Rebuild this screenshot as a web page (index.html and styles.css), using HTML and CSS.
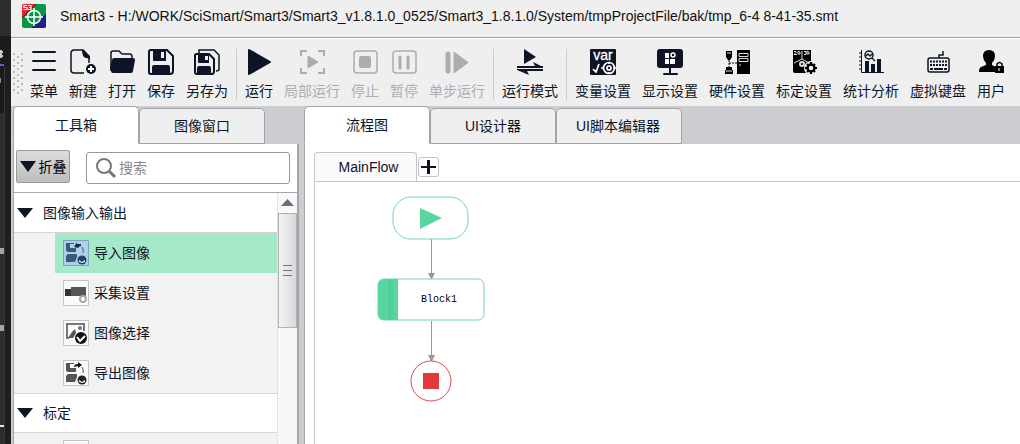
FILE: index.html
```html
<!DOCTYPE html>
<html lang="zh-CN">
<head>
<meta charset="utf-8">
<title>Smart3</title>
<link rel="stylesheet" href="styles.css">
</head>
<body>
<div class="desktop">
  <div class="backdrop" aria-hidden="true">
    <svg width="11" height="444" viewBox="0 0 11 444">
      <path fill="#2d2d2d" d="M0 0h11v36H0zM0 113h4v331H0z"/>
      <path fill="#1b1b1b" d="M0 36h11v77H0z"/>
      <path fill="#383838" d="M4 66h1v378H4z"/>
      <path fill="#1e1e1e" d="M5 66h6v378H5z"/>
      <path stroke="#c9c9c9" stroke-width="2" d="M0 52h3M1 50v8M0 56h3"/>
      <path fill="#6d5bd6" d="M0 64h4v2H0z"/>
      <path fill="#888" d="M0 78h1v5H0z"/>
      <path fill="#a5a5a5" d="M0 248h4v6H0zM0 325h4v6H0z"/>
      <path fill="#e5e5e5" d="M0 425h4v2H0z"/>
    </svg>
  </div>
  <div class="window">
    <header class="titlebar">
      <svg width="24" height="24" viewBox="0 0 24 24" aria-hidden="true">
        <rect width="24" height="24" rx="2" fill="#079447"/>
        <path fill="#e8222c" d="M2 0h12L0 14V2a2 2 0 0 1 2-2z"/>
        <path fill="#211f86" d="M24 10v12a2 2 0 0 1-2 2H10z"/>
        <path stroke="#06351f" d="M14 0 0 14M24 10 10 24"/>
        <circle cx="12" cy="13" r="6.500" fill="none" stroke="#fff" stroke-width="1.500"/>
        <path stroke="#fff" stroke-width="1.500" d="M12 4v18M3 13h18"/>
        <path fill="none" stroke="#fff" stroke-width="1.200" d="M5 1.500H2v2h3v2H1.500M6 1.500h3v4H6M7 3.500h2"/>
      </svg>
      <h1 class="title">Smart3 - H:/WORK/SciSmart/Smart3/Smart3_v1.8.1.0_0525/Smart3_1.8.1.0/System/tmpProjectFile/bak/tmp_6-4 8-41-35.smt</h1>
    </header>

    <nav class="toolbar" aria-label="工具栏">
      <span class="grip" aria-hidden="true"></span>
      <div class="group">
        <button class="tool"><svg viewBox="0 0 26 26" aria-hidden="true"><path stroke="currentColor" stroke-width="2" stroke-linecap="round" d="M2 3h22M2 12h22M2 21h22"/></svg>菜单</button>
        <button class="tool"><svg viewBox="0 0 26 26" aria-hidden="true"><path fill="none" stroke="currentColor" stroke-width="1.500" d="M14 24H4a3 3 0 0 1-3-3V4a3 3 0 0 1 3-3h9l6 7v6"/><path fill="currentColor" d="M12 1h2l6 6v5q0-3-4-3-4-1-4-8z"/><circle cx="21" cy="20" r="5" fill="currentColor"/><path stroke="#fff" stroke-width="2" d="M21 17v6M18 20h6"/></svg>新建</button>
        <button class="tool"><svg viewBox="0 0 26 26" aria-hidden="true"><path fill="none" stroke="currentColor" stroke-width="1.500" stroke-linejoin="round" d="M2 22V4q0-2 2-2h6l3 3h8q2 0 2 3v2"/><path fill="currentColor" d="M5 9h19q2 0 2 2l-2 11q0 2-2 2H4q-2 0-2-2L1 19l2-8q0-2 2-2z"/></svg>打开</button>
        <button class="tool"><svg viewBox="0 0 26 26" aria-hidden="true"><path fill="none" stroke="currentColor" stroke-width="2" stroke-linejoin="round" d="M3 1h16l6 6v15q0 3-3 3H3q-2 0-2-2V3q0-2 2-2z"/><path fill="currentColor" d="M5 1h13v11H6q-1 0-1-1zM6 16h14q2 0 2 2v7H4v-7q0-2 2-2z"/><path fill="#efefef" d="M13 3h3v6h-3z"/></svg>保存</button>
        <button class="tool"><svg viewBox="0 0 26 26" aria-hidden="true"><path fill="none" stroke="currentColor" stroke-width="1.500" d="M5 4V1h15l5 5v14q0 2-3 2"/><path fill="none" stroke="currentColor" stroke-width="2" stroke-linejoin="round" d="M2 5h13l5 5v12q0 3-2 3H3q-2 0-2-2V6z"/><path fill="currentColor" d="M4 5h11v9H5q-1 0-1-1zM5 17h10q2 0 2 2v6H3v-6q0-2 2-2z"/><path fill="#efefef" d="M11 7h3v4h-3z"/></svg>另存为</button>
      </div>
      <div class="group">
        <button class="tool"><svg viewBox="0 0 26 26" aria-hidden="true"><path fill="currentColor" stroke="currentColor" stroke-width="2" stroke-linejoin="round" d="m3 1 21 12L3 25z"/></svg>运行</button>
        <button class="tool" disabled><svg viewBox="0 0 26 26" aria-hidden="true"><path fill="none" stroke="currentColor" stroke-width="2" d="M2 7V2h6M19 2h6v5M25 19v5h-6M8 24H2v-5"/><path fill="currentColor" stroke="currentColor" stroke-linejoin="round" d="m9 7 10 6-10 6z"/></svg>局部运行</button>
        <button class="tool" disabled><svg viewBox="0 0 26 26" aria-hidden="true"><rect x="2" y="2" width="23" height="22" rx="3" fill="none" stroke="currentColor" stroke-width="1.500"/><rect x="7" y="7" width="12" height="12" rx="2" fill="currentColor"/></svg>停止</button>
        <button class="tool" disabled><svg viewBox="0 0 26 26" aria-hidden="true"><rect x="2" y="2" width="23" height="22" rx="3" fill="none" stroke="currentColor" stroke-width="1.500"/><path stroke="currentColor" stroke-width="3" stroke-linecap="round" d="M9 8v11M17 8v11"/></svg>暂停</button>
        <button class="tool" disabled><svg viewBox="0 0 26 26" aria-hidden="true"><path fill="none" stroke="currentColor" stroke-width="5" stroke-linecap="round" d="M4 5v17"/><path fill="currentColor" stroke="currentColor" stroke-linejoin="round" d="m10 3 14 10.500L10 24z"/></svg>单步运行</button>
      </div>
      <div class="group">
        <button class="tool"><svg viewBox="0 0 26 26" aria-hidden="true"><path fill="currentColor" d="m7 0 12 8-12 7z"/><path fill="currentColor" d="M0 17h18l-2-4 8 4h2v2H0zM26 20v2H10l2 4-12-5v-1z"/></svg>运行模式</button>
      </div>
      <div class="group">
        <button class="tool"><svg viewBox="0 0 26 26" aria-hidden="true"><rect width="26" height="26" rx="1" fill="currentColor"/><text class="var-text" x="13" y="11">var</text><g fill="none" stroke="#fff" stroke-width="1.700"><circle cx="19" cy="19" r="5.500"/><circle cx="19" cy="19" r="2"/><path d="m3 20 3 3 3-8M11 19h3M19 13v2M19 23v2M23 19h3"/></g></svg>变量设置</button>
        <button class="tool"><svg viewBox="0 0 26 26" aria-hidden="true"><rect y="0" width="26" height="19" rx="3" fill="currentColor"/><path stroke="currentColor" stroke-width="2" stroke-linecap="round" d="M13 18v6M7 25h13"/><path fill="#fff" d="M8 4h4v5H8zM8 10h4v5H8zM13 10h5v5h-5z"/><circle cx="16" cy="6" r="2" fill="none" stroke="#fff" stroke-width="1.500"/></svg>显示设置</button>
        <button class="tool black"><svg viewBox="0 0 26 26" aria-hidden="true"><path fill="currentColor" d="M13 1h13v24H13zM2 2h6v6L6 11H4L2 8zM2 18h6v3h1v4H1v-4h1z"/><path stroke="currentColor" d="M5 11v8M5 14h8" stroke-dasharray="2 1"/><path fill="none" stroke="#ddd" d="M15 4.500h9v3h-9zM15 9.500h9v3h-9zM15 16h2M3 4h4M2 22h6"/></svg>硬件设置</button>
        <button class="tool black"><svg viewBox="0 0 26 26" aria-hidden="true"><path fill="currentColor" d="M2 1h18v12l-5 6v5H4q-2 0-2-2z"/><g fill="none" stroke="#ddd"><path d="M3 2.500h2v1L3 5.500h3M7 2v3h2V3zM13 2.500h2v3h-2M16 2v3h2V3zM11 2v8L3 14M11 10l7 4"/><circle cx="11" cy="15" r="2" stroke-width="2"/></g><circle cx="20" cy="19" r="4.500" fill="none" stroke="#efefef" stroke-width="5"/><circle cx="20" cy="19" r="3.500" fill="none" stroke="currentColor" stroke-width="2.500"/><path fill="none" stroke="currentColor" stroke-width="2" d="M20 13v3M20 22v3M14 19h3M23 19h3M16 15l2 2M24 15l-2 2M16 23l2-2M24 23l-2-2"/></svg>标定设置</button>
        <button class="tool"><svg viewBox="0 0 26 26" aria-hidden="true"><path stroke="currentColor" fill="none" d="M3.500 1v22.500H26M1 4h2M1 8h2M1 12h2M1 16h2M1 20h2"/><path fill="currentColor" d="M7 12h4v12H7zM13 15h4v9h-4zM19 10h4v14h-4z"/><circle cx="11" cy="6" r="4" fill="none" stroke="currentColor" stroke-width="1.500"/><path stroke="currentColor" fill="none" stroke-width="1.300" d="m14 9 3 3M8 7l2-2 2 2 2-2"/></svg>统计分析</button>
        <button class="tool"><svg viewBox="0 0 26 26" aria-hidden="true"><g fill="none" stroke="currentColor" stroke-width="1.500"><path d="M14 9V6h4V2"/><rect x="3" y="9" width="21" height="14" rx="2"/><path stroke-width="2" stroke-dasharray="2 1" d="M5 12.500h17M5 16h17"/><path stroke-width="2" d="M5 20h3M9 20h9M19 20h3"/></g></svg>虚拟键盘</button>
        <button class="tool black"><svg viewBox="0 0 26 26" aria-hidden="true"><path fill="currentColor" d="M11 1q6 0 6 6 0 4-3 7v2l4 2v5H1q0-4 2-5l5-2v-2Q5 11 5 7q0-6 6-6zM17 17h9v7h-9z"/><path fill="none" stroke="currentColor" stroke-width="1.500" d="M19 17v-2q2.500-3 5 0v2"/><path stroke="#fff" d="M21 19v3"/></svg>用户</button>
      </div>
    </nav>

    <main class="workspace">
      <aside class="side">
        <div class="tabs" role="tablist">
          <button class="tab active" role="tab" aria-selected="true">工具箱</button>
          <button class="tab" role="tab" aria-selected="false">图像窗口</button>
        </div>
        <div class="side-body">
          <div class="filter">
            <button class="fold"><svg width="16" height="11" viewBox="0 0 16 11" aria-hidden="true"><path fill="#0c1426" d="M0 0h16L8 11z"/></svg>折叠</button>
            <label class="search">
              <svg width="22" height="22" viewBox="0 0 22 22" aria-hidden="true"><circle cx="9" cy="9" r="7" fill="none" stroke="#777" stroke-width="2"/><path stroke="#777" stroke-width="3" d="m14 14 6 6"/></svg>
              <input type="text" placeholder="搜索" aria-label="搜索">
            </label>
          </div>
          <div class="tree-wrap">
            <div class="tree">
              <button class="branch"><svg width="16" height="10" viewBox="0 0 16 10" aria-hidden="true"><path fill="#0c1426" d="M0 0h16L8 10z"/></svg>图像输入输出</button>
              <ul class="leaves">
                <li><button class="leaf selected"><svg class="thumb" viewBox="0 0 26 26" aria-hidden="true"><path fill="#b0cff0" stroke="#7ba5b5" d="M.5.500h25v25H.5z"/><path fill="#3d5b75" d="M3 3h4v5h6v4H5q-2 0-2-2zM5 14h9v3l-2 5H3v-6z"/><path fill="none" stroke="#3d5b75" d="M7 3.500h4M19 7q2 3 1 6"/><path fill="#12314d" d="m11 7 3-5v2h4v2q-2 0-3 2z"/><circle cx="19" cy="20" r="4.500" fill="#204462"/><path fill="#dcebff" d="m16 20 3 2 3-2v2l-3 1-3-1z"/></svg>导入图像</button></li>
                <li><button class="leaf"><svg class="thumb" viewBox="0 0 26 26" aria-hidden="true"><path fill="#fafafa" stroke="#c4c4c4" d="M.5.500h25v25H.5z"/><path fill="#555" d="M8 7h15v9H8z"/><path fill="#333" d="M2 9h6v7H2z"/><circle cx="20" cy="19" r="3" fill="#fff" stroke="#aaa" stroke-width="2"/></svg>采集设置</button></li>
                <li><button class="leaf"><svg class="thumb" viewBox="0 0 26 26" aria-hidden="true"><path fill="#fafafa" stroke="#c4c4c4" d="M.5.500h25v25H.5z"/><path fill="none" stroke="#777" stroke-width="2" d="M21 11V4H4v14h2"/><path fill="#555" d="m5 18 4-6 3-3 1 4-3 5z"/><circle cx="17" cy="8" r="2" fill="#777"/><circle cx="18" cy="18" r="6" fill="#111"/><path fill="none" stroke="#fff" stroke-width="2" d="m14 17 3 4 5-5"/></svg>图像选择</button></li>
                <li><button class="leaf"><svg class="thumb" viewBox="0 0 26 26" aria-hidden="true"><path fill="#fafafa" stroke="#c4c4c4" d="M.5.500h25v25H.5z"/><path fill="#555" d="M3 3h4v5h6v4H5q-2 0-2-2zM5 14h9v3l-2 5H3v-6z"/><path fill="none" stroke="#555" d="M7 3.500h4M19 7q2 3 1 6"/><path fill="#111" d="M11 7q0-3 4-3V2l4 3-4 3V6z"/><circle cx="19" cy="20" r="4.500" fill="#222"/><path fill="#fff" d="m16 20 3 2 3-2v2l-3 1-3-1z"/></svg>导出图像</button></li>
              </ul>
              <button class="branch"><svg width="16" height="10" viewBox="0 0 16 10" aria-hidden="true"><path fill="#0c1426" d="M0 0h16L8 10z"/></svg>标定</button>
              <ul class="leaves">
                <li><button class="leaf" aria-label="标定工具"><svg class="thumb" viewBox="0 0 26 26" aria-hidden="true"><path fill="#fafafa" stroke="#c4c4c4" d="M.5.500h25v25H.5z"/></svg></button></li>
              </ul>
            </div>
            <div class="scrollbar" aria-hidden="true">
              <svg class="scroll-up" width="13" height="7" viewBox="0 0 13 7"><path fill="#6c7079" d="M6.500 0 13 7H0z"/></svg>
              <span class="scroll-thumb"><i></i><i></i><i></i></span>
            </div>
          </div>
        </div>
      </aside>

      <section class="editor">
        <div class="tabs" role="tablist">
          <button class="tab active" role="tab" aria-selected="true">流程图</button>
          <button class="tab" role="tab" aria-selected="false">UI设计器</button>
          <button class="tab start" role="tab" aria-selected="false">UI脚本编辑器</button>
        </div>
        <div class="editor-body">
          <div class="flow-tabs">
            <button class="flow-tab">MainFlow</button>
            <button class="add" aria-label="添加流程"><svg width="15" height="14" viewBox="0 0 15 14" aria-hidden="true"><path stroke="#0c1426" stroke-width="3" d="M7.500 0v14"/><path stroke="#0c1426" stroke-width="2" d="M0 7h15"/></svg></button>
          </div>
          <div class="canvas">
            <svg width="200" height="240" viewBox="0 0 200 240" role="img" aria-label="MainFlow">
              <path stroke="#999" d="M116.500 57v40M116.500 139v40"/>
              <path fill="#999" d="M113 91h7l-3 6h-1zM113 173h7l-3 6h-1z"/>
              <rect x="78" y="15" width="75" height="42" rx="18" fill="#fff" stroke="#6fdaac"/>
              <path fill="#5bd5a0" d="m105 26 22 10-22 11z"/>
              <rect x="63" y="97" width="106" height="41" rx="6" fill="#fff" stroke="#6fdaac"/>
              <path fill="#5bd5a0" d="M69 97h14v41H69q-6 0-6-6v-29q0-6 6-6z"/>
              <path fill="#4fd096" d="M73 97q5 2 5 7v27q0 5-5 7z"/>
              <text class="node-name" x="106" y="120">Block1</text>
              <circle cx="116" cy="199" r="20" fill="#fff" stroke="#e2484d"/>
              <path fill="#e2393d" d="M108 191h16v16h-16z"/>
            </svg>
          </div>
        </div>
      </section>
    </main>
  </div>
</div>
</body>
</html>
```

FILE: styles.css
```css
* { box-sizing: border-box; }

body {
  margin: 0;
  color: #0c1426;
  font: 14px/20px "Liberation Sans", "Noto Sans CJK SC", sans-serif;
}

button, input { font: inherit; color: inherit; }
button { border: 0; background: none; padding: 0; white-space: nowrap; }
svg { display: block; flex: none; }

.desktop { display: flex; height: 100vh; overflow: hidden; }
.backdrop { width: 11px; flex: none; background: #1e1e1e; }
.window {
  flex: 1;
  min-width: 0;
  display: flex;
  flex-direction: column;
  background: #efefef;
}

.titlebar {
  display: flex;
  align-items: center;
  gap: 14px;
  height: 38px;
  padding: 0 11px 5px;
  border-bottom: 1px solid #a0a0a0;
  flex: none;
}
.title { margin: 0; font-size: 14px; font-weight: 400; line-height: 18px; white-space: nowrap; color: #111; }

.toolbar {
  display: flex;
  height: 68px;
  flex: none;
  padding: 10px 0 6px 2px;
  border-top: 1px solid #fff;
}
.grip {
  width: 10px;
  height: 42px;
  margin-top: 4px;
  background:
    radial-gradient(circle at 1px 1px, #bbb 1px, transparent 1px) 0 0 / 8px 6px,
    radial-gradient(circle at 1px 1px, #bbb 1px, transparent 1px) 4px 3px / 8px 6px;
}
.group { display: flex; gap: 11px; padding: 0 8px; }
.grip + .group { padding-left: 7px; }
.group + .group { border-left: 1px solid #ccc; }
.tool {
  display: flex;
  flex-direction: column;
  align-items: center;
  gap: 6px;
}
.tool svg { width: 26px; height: 26px; }
.tool:disabled { color: #adadb1; }
.tool.black svg { color: #000; }
.var-text { font-size: 14px; text-anchor: middle; fill: #fff; stroke: #fff; stroke-width: 0.3; }

.workspace {
  flex: 1;
  min-height: 0;
  display: flex;
  gap: 5px;
  padding-left: 2px;
  background: #cbcdd1;
}
.side { width: 286px; flex: none; display: flex; flex-direction: column; }
.editor { flex: 1; min-width: 0; display: flex; flex-direction: column; }

.tabs { display: flex; align-items: flex-end; height: 38px; flex: none; }
.tab {
  width: 126px;
  height: 36px;
  border: 1px solid #a0a3ab;
  border-radius: 5px 5px 0 0;
  background: #efefef;
}
.tab.active { height: 38px; background: #fff; border-bottom-color: #fff; }
.tab.start { text-align: left; padding-left: 19px; }

.side-body {
  flex: 1;
  min-height: 0;
  display: flex;
  flex-direction: column;
  background: #fff;
  border: solid #a5a5ad;
  border-width: 0 2px 0 1px;
}
.filter { display: flex; gap: 16px; height: 48px; padding: 6px 7px 0 2px; flex: none; }
.fold {
  display: flex;
  align-items: center;
  justify-content: center;
  gap: 3px;
  width: 54px;
  height: 33px;
  flex: none;
  border: 1px solid #999;
  border-radius: 2px;
  background: linear-gradient(#dcdcdc, #bdbdbd);
  color: #000;
}
.search {
  display: flex;
  align-items: center;
  gap: 2px;
  flex: 1;
  min-width: 0;
  height: 32px;
  margin-top: 2px;
  padding: 0 8px;
  border: 1px solid #999;
  border-radius: 3px;
}
.search input { flex: 1; min-width: 0; border: 0; padding: 0; outline: 0; background: none; }
.search input::placeholder { color: #88888c; opacity: 1; }

.tree-wrap { flex: 1; min-height: 0; display: flex; border-top: 1px solid #aaa; }
.tree { flex: 1; min-width: 0; overflow: hidden; background: #f2f2f2; }
.branch {
  display: flex;
  align-items: center;
  gap: 10px;
  width: 100%;
  height: 40px;
  padding-left: 3px;
  background: #fff;
  border-bottom: 1px solid #d5d5da;
}
.leaves { list-style: none; margin: 0; padding: 0 0 0 41px; }
.leaves + .branch { border-top: 1px solid #d5d5da; }
.leaf { display: flex; align-items: center; gap: 5px; width: 100%; height: 40px; padding-left: 8px; }
.leaf.selected { background: #a6e9ca; }
.thumb { width: 26px; height: 26px; }

.scrollbar {
  display: flex;
  flex-direction: column;
  width: 20px;
  flex: none;
  background: #f8f8f8;
  border-left: 1px solid #e2e2e2;
}
.scroll-up { margin: 6px auto 7px; }
.scroll-thumb {
  display: flex;
  flex-direction: column;
  align-items: center;
  justify-content: center;
  gap: 4px;
  height: 115px;
  border: 1px solid #b0b0b4;
  background: linear-gradient(90deg, #f4f4f4, #d8d8d8);
}
.scroll-thumb i { width: 9px; height: 1px; background: #777; }

.editor-body {
  flex: 1;
  min-height: 0;
  display: flex;
  flex-direction: column;
  padding: 8px 0 0 9px;
  background: #fff;
  border-left: 1px solid #a5a5ad;
}
.flow-tabs { display: flex; align-items: center; gap: 1px; height: 29px; flex: none; }
.flow-tab {
  width: 103px;
  height: 29px;
  padding-left: 6px;
  border: 1px solid #c4c4c8;
  border-bottom: 0;
  border-radius: 4px 4px 0 0;
  background: #fafafa;
}
.add {
  display: grid;
  place-items: center;
  width: 21px;
  height: 20px;
  border: 1px solid #c4c4c8;
  border-radius: 3px;
}
.canvas { flex: 1; min-height: 0; overflow: hidden; border: solid #c8c8cc; border-width: 1px 0 0 1px; }
.node-name { font: 10px "Liberation Mono", monospace; fill: #000; }
```
